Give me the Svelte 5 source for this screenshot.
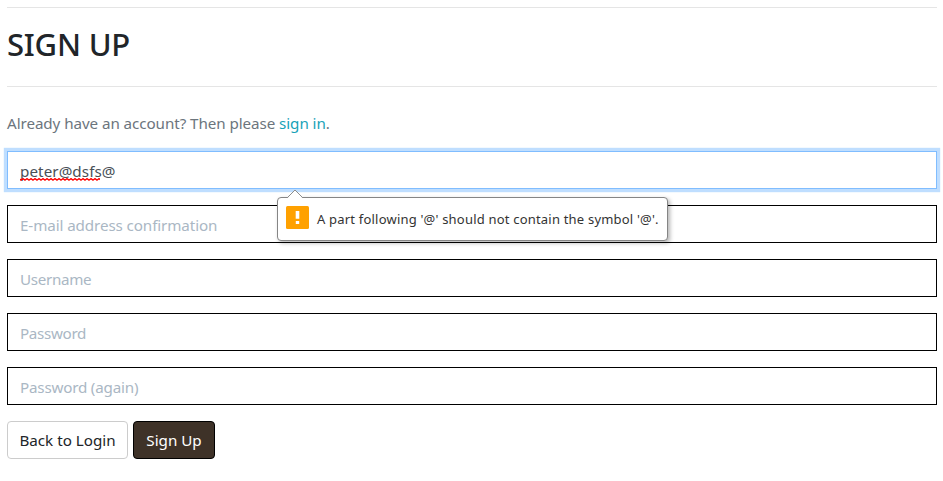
<script>
  const email = ['peter@dsfs', '@'];
  const fields = [
    { id: 'email2', type: 'email', label: 'E-mail address confirmation' },
    { id: 'username', type: 'text', label: 'Username' },
    { id: 'password1', type: 'password', label: 'Password' },
    { id: 'password2', type: 'password', label: 'Password (again)' }
  ];
</script>

<main>
  <header><h1>SIGN UP</h1></header>
  <p class="intro">Already have an account? Then please <a href="#signin">sign in</a>.</p>
  <form onsubmit={(e) => e.preventDefault()}>
    <div class="group">
      <div class="control focused" role="textbox" tabindex="0" aria-label="E-mail address">
        <span class="misspelled">{email[0]}<svg class="squiggle" width="80" height="3" aria-hidden="true">
          <defs><pattern id="wave" width="4" height="3" patternUnits="userSpaceOnUse"><path d="M-1 .5 1 2.2 3 .5 5 2.2" fill="none" stroke="#f00" stroke-width="1.2" /></pattern></defs>
          <rect width="80" height="3" fill="url(#wave)" />
        </svg></span>{email[1]}
      </div>
      <div class="bubble" role="alert">
        <svg class="arrow" width="18" height="10" viewBox="0 0 18 10" aria-hidden="true"><path d="M1 9.5 9 1.2 17 9.5V10H1Z" fill="#fff" /><path d="M1 9 9 1 17 9" fill="none" stroke="#8d8d8d" /></svg>
        <svg class="warning" width="23" height="23" viewBox="0 0 23 23" aria-hidden="true"><rect width="23" height="23" rx="1.5" fill="#ffa100" /><path d="M9.7 5h3.6v7.7H9.7ZM9.8 15h3.4v3H9.8Z" fill="#fff" /></svg>
        <span>A part following '@' should not contain the symbol '@'.</span>
      </div>
    </div>
    {#each fields as field}
      <input class="control {field.id}" type={field.type} placeholder={field.label} aria-label={field.label} />
    {/each}
    <div class="actions">
      <button type="button" class="back">Back to Login</button>
      <button type="submit" class="submit">Sign Up</button>
    </div>
  </form>
</main>

<style>
  :global(body) { margin: 0; background: #fff; }
  main {
    box-sizing: border-box;
    height: 481px;
    padding: 7px 6px 0 7px;
    font: 15.2px/24px "Noto Sans", "Open Sans", sans-serif;
    color: #212529;
    overflow: hidden;
  }
  header {
    box-sizing: border-box;
    height: 80px;
    padding-top: 17px;
    border-top: 1px solid #e5e5e5;
    border-bottom: 1px solid #e5e5e5;
  }
  h1 { margin: 0; font-size: 31px; line-height: 38px; font-weight: 550; letter-spacing: -.2px; }
  .intro { margin: 24px 0 16px; height: 24px; color: #6c757d; white-space: nowrap; letter-spacing: -.07px; }
  a { color: #17a2b8; text-decoration: none; }
  form { display: flex; flex-direction: column; gap: 16px; }
  .group { position: relative; }
  .control {
    box-sizing: border-box;
    display: block;
    width: 100%;
    height: 38px;
    margin: 0;
    padding: 7px 12px 5px;
    border: 1px solid #000;
    border-radius: 0;
    background: #fff;
    color: #495057;
    font: inherit;
    letter-spacing: -.1px;
    outline: 0;
  }
  .control::placeholder { color: #aab7c4; opacity: 1; }
  .username, .password1 { letter-spacing: -.32px; }
  .password2 { letter-spacing: -.2px; }
  .focused { border-color: #80bdff; box-shadow: 0 0 0 3.2px #bfdeff; letter-spacing: .08px; }
  .misspelled { position: relative; }
  .squiggle { position: absolute; left: 0; bottom: 0; }
  .bubble {
    position: absolute;
    z-index: 1;
    left: 270px;
    top: 46px;
    box-sizing: border-box;
    width: 391px;
    height: 44px;
    display: flex;
    align-items: center;
    gap: 8px;
    padding: 0 8px;
    border: 1px solid #858585;
    border-radius: 4px;
    background: #fff;
    box-shadow: 2px 2px 4px rgba(0, 0, 0, .3);
    color: #333;
    font-size: 13px;
    letter-spacing: .2px;
    white-space: nowrap;
  }
  .arrow { position: absolute; left: 8px; top: -9px; }
  .warning { flex: none; margin-top: -3px; }
  .actions { display: flex; gap: 5px; }
  button {
    box-sizing: border-box;
    height: 38px;
    padding: 0 0 1px;
    border: 1px solid #ccc;
    border-radius: 4px;
    background: #fff;
    color: #212529;
    font: inherit;
    white-space: nowrap;
  }
  .back { width: 121px; }
  .submit { width: 82px; border-color: #000; background: #3e3228; color: #fff; }
</style>
